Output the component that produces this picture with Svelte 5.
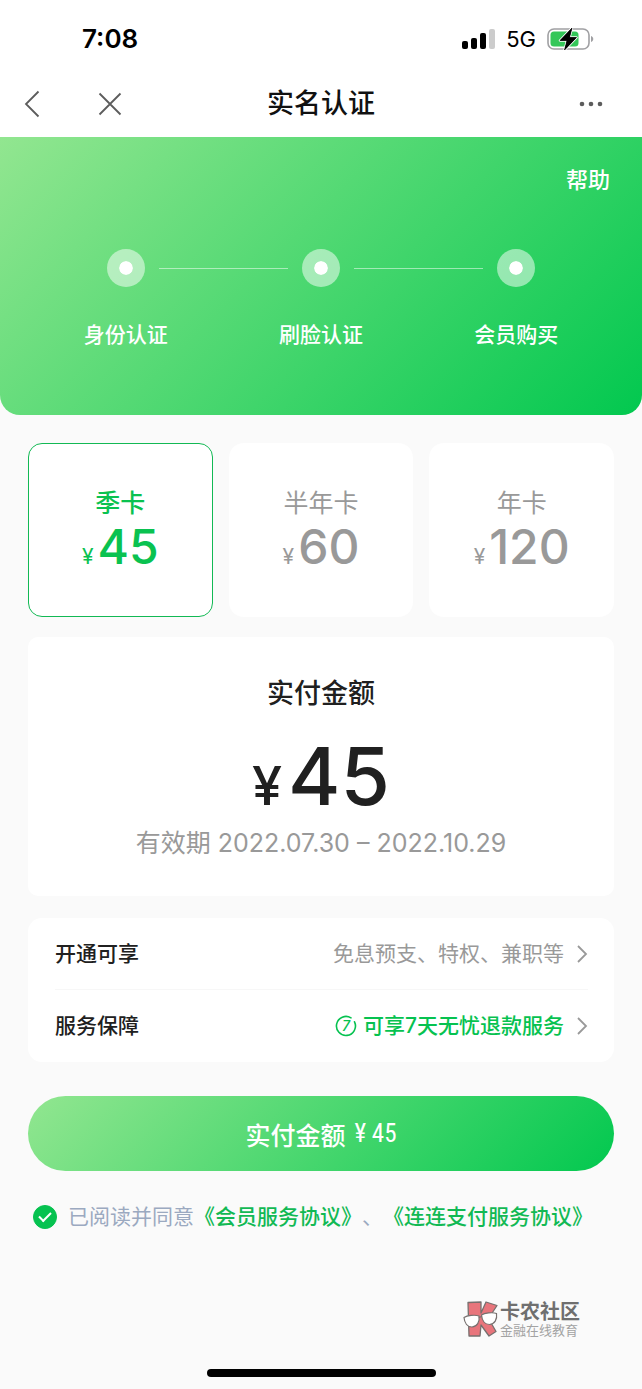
<script>
  const steps = ['身份认证', '刷脸认证', '会员购买'];

  const plans = [
    { id: 'quarter', name: '季卡', price: 45, end: '2022.10.29' },
    { id: 'half', name: '半年卡', price: 60, end: '2023.01.29' },
    { id: 'year', name: '年卡', price: 120, end: '2023.07.29' }
  ];

  let selected = $state('quarter');
  let agreed = $state(true);
  let plan = $derived(plans.find((p) => p.id === selected));
</script>

{#snippet chevron()}
  <svg width="12" height="20" viewBox="0 0 12 20" aria-hidden="true">
    <path d="M2 2l8 8-8 8" fill="none" stroke="#999" stroke-width="1.800" />
  </svg>
{/snippet}

<div class="page">
  <div class="status-bar">
    <span class="time">7:08</span>
    <div class="status-icons">
      <svg width="33" height="20" viewBox="0 0 33 20" aria-hidden="true">
        <rect x="0" y="12" width="6" height="8" rx="2" />
        <rect x="9" y="9" width="6" height="11" rx="2" />
        <rect x="18" y="4" width="6" height="16" rx="2" />
        <rect x="27" y="0" width="6" height="20" rx="2" fill="#ccc" />
      </svg>
      <span class="network">5G</span>
      <svg width="47" height="24" viewBox="0 0 47 24" aria-hidden="true">
        <rect x="1" y="2" width="41" height="20" rx="6" fill="#fff" stroke="#a0a0a3" stroke-width="1.6" />
        <path d="M44 9c3 1 3 5 0 6z" fill="#a0a0a3" />
        <rect x="3.5" y="4.5" width="28" height="15" rx="3.5" fill="#34c759" />
        <path
          d="M25 1L13 13.500h7L17.500 23 29.500 10.500h-7z"
          fill="#000"
          stroke="#fff"
          stroke-width="2.4"
          stroke-linejoin="round"
          paint-order="stroke"
        />
        <path d="M25 1L13 13.500h7L17.500 23 29.500 10.500h-7z" stroke="#000" stroke-width="0.6" />
      </svg>
    </div>
  </div>

  <header class="nav">
    <div class="nav-left">
      <button type="button" aria-label="返回">
        <svg width="16" height="28" viewBox="0 0 16 28">
          <path d="M14.500 1.500L2 14l12.500 12.500" fill="none" stroke="#5c5c5c" stroke-width="1.800" />
        </svg>
      </button>
      <button type="button" aria-label="关闭">
        <svg width="24" height="24" viewBox="0 0 24 24">
          <path d="M1.500 1.500l21 21M22.500 1.500l-21 21" fill="none" stroke="#5c5c5c" stroke-width="1.800" />
        </svg>
      </button>
    </div>
    <h1>实名认证</h1>
    <button type="button" class="more" aria-label="更多">
      <svg width="24" height="6" viewBox="0 0 24 6" fill="#5c5c5c">
        <circle cx="3" cy="3" r="2.3" />
        <circle cx="12" cy="3" r="2.3" />
        <circle cx="21" cy="3" r="2.3" />
      </svg>
    </button>
  </header>

  <section class="hero">
    <a class="help" href="#help">帮助</a>
    <ol class="steps">
      {#each steps as step}
        <li>
          <div class="track"><span class="dot"></span></div>
          <span>{step}</span>
        </li>
      {/each}
    </ol>
  </section>

  <main>
    <div class="plans" role="radiogroup" aria-label="会员卡">
      {#each plans as p}
        <label class="plan" class:active={selected === p.id}>
          <input type="radio" name="plan" value={p.id} bind:group={selected} />
          <span class="plan-name">{p.name}</span>
          <span class="plan-price"><small>¥</small>{p.price}</span>
        </label>
      {/each}
    </div>

    <section class="summary">
      <h2>实付金额</h2>
      <p class="amount"><small>¥</small>{plan.price}</p>
      <p class="period">有效期 2022.07.30 – {plan.end}</p>
    </section>

    <section class="benefits">
      <a class="row" href="#benefits">
        <span>开通可享</span>
        <span class="value">免息预支、特权、兼职等</span>
        {@render chevron()}
      </a>
      <a class="row" href="#guarantee">
        <span>服务保障</span>
        <span class="value green">
          <svg width="22" height="22" viewBox="0 0 22 22" aria-hidden="true">
            <path
              d="M16 2.900A9.500 9.500 0 1 0 19.500 6.800"
              fill="none"
              stroke="#06c250"
              stroke-width="1.600"
              stroke-linecap="round"
            />
            <text x="11" y="16" text-anchor="middle" font-size="14" font-weight="500" font-style="italic" fill="#06c250">7</text>
          </svg>
          可享7天无忧退款服务
        </span>
        {@render chevron()}
      </a>
    </section>

    <button type="button" class="pay" disabled={!agreed}>
      实付金额 <span class="pay-price">¥ {plan.price}</span>
    </button>

    <div class="agreement">
      <input id="agree" type="checkbox" bind:checked={agreed} />
      <p>
        <label for="agree">已阅读并同意</label><a href="#member">《会员服务协议》</a>、<a href="#lianlian">《连连支付服务协议》</a>
      </p>
    </div>
  </main>

  <footer>
    <div class="brand">
      <svg width="35" height="36" viewBox="0 0 35 36" aria-hidden="true">
        <path
          d="M5 1.500L18 1v11L23 1l11 3.500-8.500 13L33 30.500 26 35l-8-11-1 11H6z"
          fill="#e8757c"
          stroke="#77706f"
          stroke-width="1.300"
          stroke-linejoin="round"
        />
        <g fill="#fff" stroke="#77706f" stroke-width="1.200">
          <path d="M1 16.500c3-2 11-3 15-1.500 1 6-2 10.500-7 11-4.500 0-7.500-4-8-9.500z" />
          <path d="M18.500 14c3-2 11-3 15-1.500 1 6-2 10.500-7 11-4.500 0-7.500-4-8-9.500z" />
          <path d="M15.800 16.500l3-1" fill="none" />
        </g>
      </svg>
      <div class="brand-text">
        <strong>卡农社区</strong>
        <span>金融在线教育</span>
      </div>
    </div>
    <div class="home-indicator"></div>
  </footer>
</div>

<style>
  :global(body) {
    margin: 0;
    background: #fafafa;
  }

  .page {
    font-family: Inter, 'Noto Sans CJK SC', sans-serif;
    font-size: 21px;
    line-height: 30px;
    color: #202020;
  }

  h1,
  h2,
  p,
  ol {
    margin: 0;
    padding: 0;
  }

  a {
    color: inherit;
    text-decoration: none;
  }

  button {
    padding: 0;
    border: none;
    background: none;
    font-family: inherit;
    cursor: pointer;
  }

  svg {
    display: block;
    flex: none;
  }

  .status-bar {
    display: flex;
    align-items: center;
    justify-content: space-between;
    height: 77px;
    padding: 0 48px 0 82px;
    background: #fff;
    color: #000;
  }

  .time {
    font-size: 26px;
    font-weight: 600;
  }

  .status-icons {
    display: flex;
    align-items: center;
    gap: 11px;
  }

  .network {
    font-size: 22px;
  }

  .nav {
    display: grid;
    grid-template-columns: 1fr auto 1fr;
    align-items: center;
    height: 60px;
    padding: 0 39px 6px 24px;
    box-sizing: border-box;
    background: #fff;
  }

  .nav-left {
    display: flex;
    align-items: center;
    gap: 58px;
  }

  .nav h1 {
    padding-left: 15px;
    font-size: 27px;
    font-weight: 500;
    color: #111;
  }

  .more {
    justify-self: end;
  }

  .hero {
    padding: 28px 28px 65px;
    border-radius: 0 0 20px 20px;
    background: linear-gradient(135deg, #92e690, #02c84f);
    color: #fff;
  }

  .help {
    display: block;
    width: fit-content;
    margin: 0 4px 54px auto;
    font-size: 22px;
    font-weight: 500;
  }

  .steps {
    display: grid;
    grid-template-columns: repeat(3, 1fr);
    list-style: none;
    text-align: center;
    font-weight: 500;
  }

  .track {
    display: flex;
    align-items: center;
    gap: 14px;
    margin-bottom: 33px;
  }

  .track::before,
  .track::after {
    content: '';
    flex: 1;
    height: 1px;
    background: rgba(255, 255, 255, 0.5);
  }

  .steps li:first-child .track::before,
  .steps li:last-child .track::after {
    visibility: hidden;
  }

  .dot {
    width: 14px;
    height: 14px;
    border: 12px solid rgba(255, 255, 255, 0.5);
    border-radius: 50%;
    background: #fff;
    background-clip: padding-box;
  }

  main {
    padding: 28px 28px 0;
  }

  .plans {
    display: grid;
    grid-template-columns: repeat(3, 1fr);
    gap: 16px;
    margin-bottom: 20px;
  }

  .plan {
    position: relative;
    display: flex;
    flex-direction: column;
    align-items: center;
    padding: 41px 0 43px;
    border: 1px solid #fff;
    border-radius: 14px;
    background: #fff;
    color: #999;
    cursor: pointer;
  }

  .plan.active {
    border-color: #12b954;
    color: #0ac250;
  }

  .plan input {
    position: absolute;
    opacity: 0;
  }

  .plan-name {
    font-size: 25px;
    line-height: 36px;
  }

  .plan.active .plan-name {
    font-weight: 500;
  }

  .plan-price {
    display: flex;
    align-items: baseline;
    gap: 4px;
    font-size: 48px;
    line-height: 52px;
    font-weight: 500;
  }

  .plan-price small {
    font-size: 21px;
    line-height: 1;
    font-weight: 400;
  }

  .summary {
    margin-bottom: 22px;
    padding: 38px 0 36px;
    border-radius: 10px;
    background: #fff;
    text-align: center;
  }

  .summary h2 {
    margin-bottom: 15px;
    font-size: 27px;
    line-height: 38px;
    font-weight: 500;
  }

  .amount {
    display: flex;
    align-items: baseline;
    justify-content: center;
    gap: 6px;
    margin-bottom: 2px;
    font-size: 80px;
    line-height: 96px;
    font-weight: 500;
  }

  .amount small {
    font-size: 54px;
    line-height: 1;
  }

  .period {
    font-size: 25px;
    line-height: 34px;
    color: #999;
  }

  .benefits {
    margin-bottom: 34px;
    padding: 0 26px 0 27px;
    border-radius: 14px;
    background: #fff;
  }

  .row {
    display: flex;
    align-items: center;
    height: 72px;
    font-weight: 500;
  }

  .row + .row {
    box-shadow: 0 -1px #f7f7f7;
  }

  .value {
    display: flex;
    align-items: center;
    gap: 6px;
    margin: 0 12px 0 auto;
    color: #999;
    font-weight: 400;
  }

  .value.green {
    color: #06c250;
    font-weight: 500;
  }

  .pay {
    display: flex;
    align-items: center;
    justify-content: center;
    gap: 9px;
    width: 100%;
    height: 75px;
    margin-bottom: 31px;
    border-radius: 38px;
    background: linear-gradient(135deg, #92e690, #02c84f);
    color: #fff;
    font-size: 25px;
    font-weight: 500;
  }

  .pay-price {
    font-family: 'Roboto Condensed', Roboto, sans-serif;
    font-weight: 400;
  }

  .agreement {
    display: flex;
    align-items: center;
    gap: 11px;
    padding-left: 5px;
    color: #9ba9c0;
    text-spacing-trim: space-all;
  }

  .agreement a {
    color: #12b954;
    font-weight: 500;
  }

  .agreement input {
    display: grid;
    place-items: center;
    flex: none;
    width: 24px;
    height: 24px;
    margin: 0;
    border: 1px solid #9ba9c0;
    border-radius: 50%;
    appearance: none;
  }

  .agreement input:checked {
    border-color: #06c250;
    background: #06c250;
  }

  .agreement input:checked::before {
    content: '';
    width: 10px;
    height: 5px;
    margin-bottom: 4px;
    border: solid #fff;
    border-width: 0 0 2px 2px;
    transform: rotate(-45deg);
  }

  footer {
    padding: 69px 62px 12px;
  }

  .brand {
    display: flex;
    align-items: center;
    justify-content: flex-end;
    gap: 2px;
    margin-bottom: 32px;
  }

  .brand-text {
    display: flex;
    flex-direction: column;
    font-size: 13px;
    line-height: 14px;
    color: #a3a3a3;
  }

  .brand-text strong {
    font-size: 20px;
    line-height: 22px;
    font-weight: 700;
    color: #6f6f6f;
  }

  .home-indicator {
    width: 229px;
    height: 8px;
    margin: 0 auto;
    border-radius: 4px;
    background: #000;
  }
</style>
